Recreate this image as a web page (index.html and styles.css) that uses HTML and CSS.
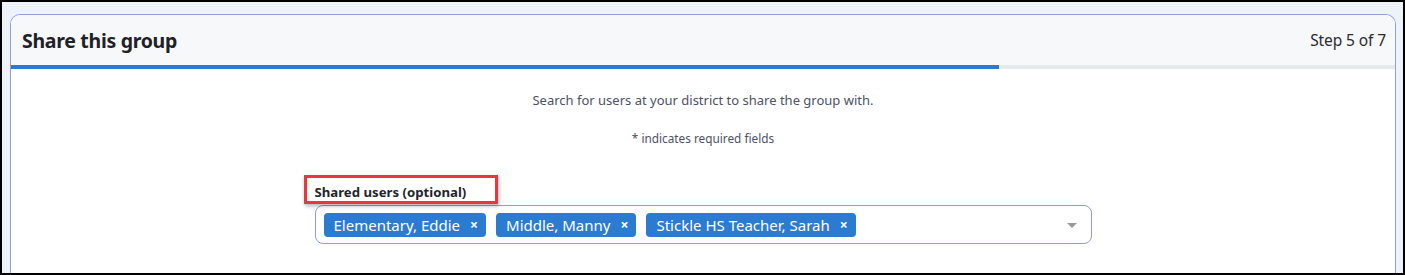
FILE: index.html
```html
<!DOCTYPE html>
<html lang="en">
<head>
  <meta charset="UTF-8">
  <link rel="stylesheet" href="styles.css">
  <title>Share this group</title>
</head>
<body>
  <div class="frame">
    <div class="card">
      <div class="card-head">
        <h2>Share this group</h2>
        <span class="step">Step 5 of 7</span>
      </div>
      <div class="progress"><div class="progress-fill"></div></div>

      <div class="card-body">
        <p class="intro">Search for users at your district to share the group with.</p>
        <p class="req">* indicates required fields</p>

        <div class="field">
          <label class="field-label marked">Shared users (optional)</label>
          <div class="select">
            <div class="tags">
              <span class="tag">Elementary, Eddie <span class="x">&#215;</span></span>
              <span class="tag">Middle, Manny <span class="x">&#215;</span></span>
              <span class="tag">Stickle HS Teacher, Sarah <span class="x">&#215;</span></span>
            </div>
            <span class="caret"></span>
          </div>
        </div>
      </div>
    </div>
  </div>
</body>
</html>
```

FILE: styles.css
```css
html, body {
  margin: 0;
  padding: 0;
}

body {
  font-family: "Segoe UI", "Noto Sans", sans-serif;
  color: #212529;
}

.frame {
  box-sizing: border-box;
  width: 1405px;
  height: 275px;
  border: 2px solid #000;
  background: #eef3fa;
  padding: 12px 7px 0 8px;
  overflow: hidden;
}

.card {
  border: 1px solid #8ea0cf;
  border-bottom: none;
  border-radius: 10px 10px 0 0;
  background: #fff;
  height: 300px;
  overflow: hidden;
}

.card-head {
  display: flex;
  justify-content: space-between;
  align-items: center;
  height: 50px;
  padding: 0 9px 0 11px;
  background: #f7f8fa;
}

.card-head h2 {
  margin: 0;
  font-size: 19.5px;
  font-weight: 700;
  color: #1f2128;
  letter-spacing: -0.3px;
}

.step {
  font-size: 15.5px;
  color: #2a2c33;
  letter-spacing: -0.1px;
}

.progress {
  height: 4px;
  background: #e6eaef;
}

.progress-fill {
  width: 988px;
  height: 4px;
  background: #2b7bd0;
}

.card-body {
  padding-top: 22px;
}

.intro, .req {
  margin: 0;
  text-align: center;
  color: #4d5266;
}

.intro {
  font-size: 13px;
}

.req {
  margin-top: 21px;
  font-size: 11.8px;
}

.field {
  width: 777px;
  margin: 37px auto 0;
}

.field-label {
  display: block;
  position: relative;
  font-size: 13.2px;
  font-weight: 700;
  color: #23252c;
  height: 22px;
  line-height: 18px;
}

.marked::after {
  content: "";
  position: absolute;
  left: -11px;
  top: -8px;
  width: 188px;
  height: 23px;
  border: 3px solid #e8383d;
  box-shadow: 1px 2px 4px rgba(0, 0, 0, 0.3);
}

.select {
  box-sizing: border-box;
  height: 39px;
  border: 1px solid #8ea0cf;
  border-radius: 8px;
  display: flex;
  align-items: center;
  justify-content: space-between;
  padding: 0 14px 0 8px;
}

.tags {
  display: flex;
  gap: 10px;
}

.tag {
  display: inline-flex;
  align-items: center;
  gap: 10px;
  height: 24px;
  padding: 0 8px 0 10px;
  background: #2b7bd0;
  color: #fff;
  border-radius: 4px;
  font-size: 15px;
}

.x {
  font-weight: 700;
  font-size: 14px;
}

.caret {
  width: 0;
  height: 0;
  border-left: 5px solid transparent;
  border-right: 5px solid transparent;
  border-top: 5px solid #9a9a9a;
  margin-top: 1px;
}
```
